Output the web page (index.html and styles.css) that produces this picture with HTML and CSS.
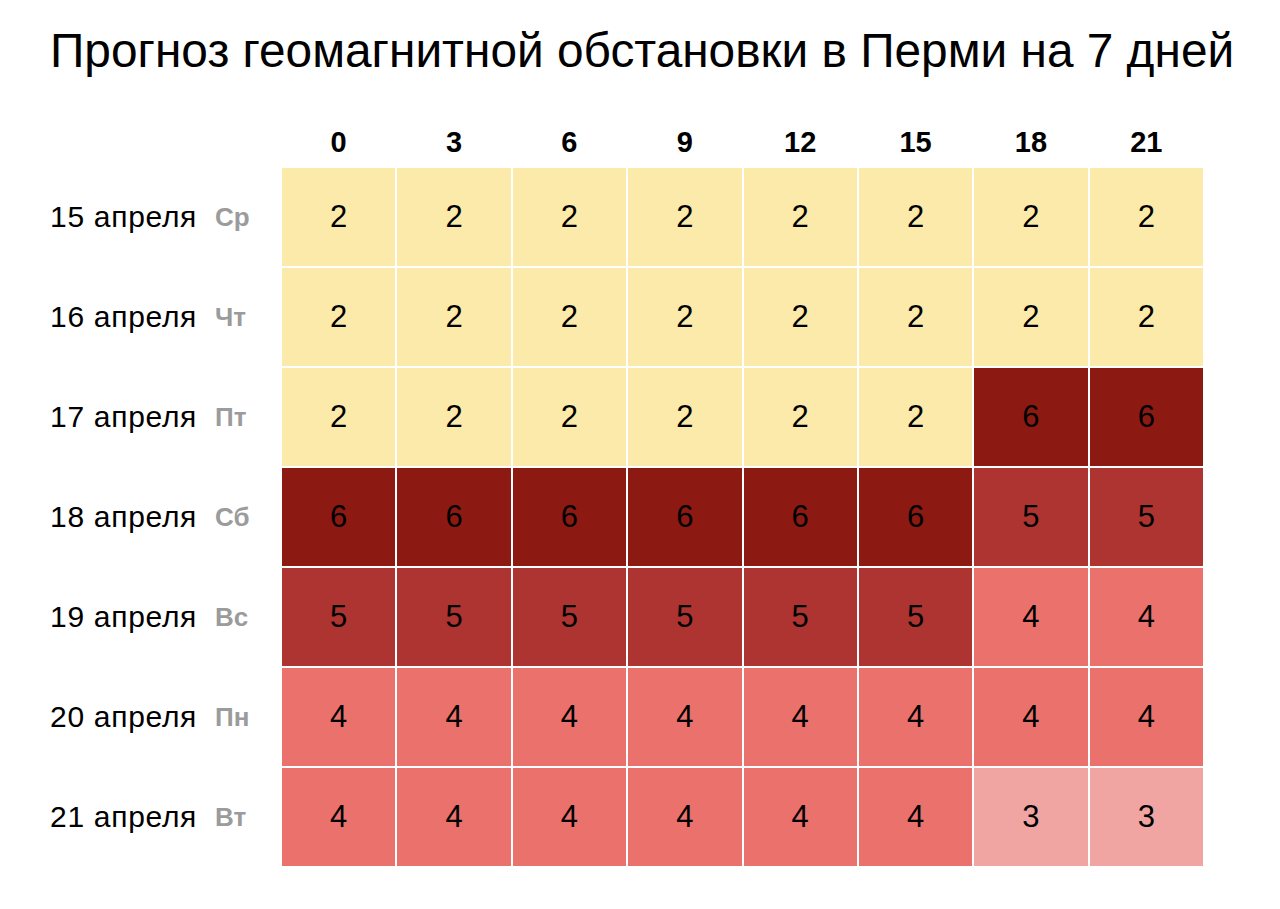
FILE: index.html
```html
<!DOCTYPE html>
<html lang="ru">
<head>
<meta charset="utf-8">
<title>Прогноз геомагнитной обстановки в Перми на 7 дней</title>
<link rel="stylesheet" href="styles.css">
</head>
<body>
<h1 class="title">Прогноз геомагнитной обстановки в Перми на 7 дней</h1>
<div class="grid">
  <div class="corner"></div>
  <div class="hour">0</div><div class="hour">3</div><div class="hour">6</div><div class="hour">9</div>
  <div class="hour">12</div><div class="hour">15</div><div class="hour">18</div><div class="hour">21</div>

  <div class="label"><span class="date">15 апреля</span><span class="dow">Ср</span></div>
  <div class="cell k2">2</div><div class="cell k2">2</div><div class="cell k2">2</div><div class="cell k2">2</div>
  <div class="cell k2">2</div><div class="cell k2">2</div><div class="cell k2">2</div><div class="cell k2">2</div>

  <div class="label"><span class="date">16 апреля</span><span class="dow">Чт</span></div>
  <div class="cell k2">2</div><div class="cell k2">2</div><div class="cell k2">2</div><div class="cell k2">2</div>
  <div class="cell k2">2</div><div class="cell k2">2</div><div class="cell k2">2</div><div class="cell k2">2</div>

  <div class="label"><span class="date">17 апреля</span><span class="dow">Пт</span></div>
  <div class="cell k2">2</div><div class="cell k2">2</div><div class="cell k2">2</div><div class="cell k2">2</div>
  <div class="cell k2">2</div><div class="cell k2">2</div><div class="cell k6">6</div><div class="cell k6">6</div>

  <div class="label"><span class="date">18 апреля</span><span class="dow">Сб</span></div>
  <div class="cell k6">6</div><div class="cell k6">6</div><div class="cell k6">6</div><div class="cell k6">6</div>
  <div class="cell k6">6</div><div class="cell k6">6</div><div class="cell k5">5</div><div class="cell k5">5</div>

  <div class="label"><span class="date">19 апреля</span><span class="dow">Вс</span></div>
  <div class="cell k5">5</div><div class="cell k5">5</div><div class="cell k5">5</div><div class="cell k5">5</div>
  <div class="cell k5">5</div><div class="cell k5">5</div><div class="cell k4">4</div><div class="cell k4">4</div>

  <div class="label"><span class="date">20 апреля</span><span class="dow">Пн</span></div>
  <div class="cell k4">4</div><div class="cell k4">4</div><div class="cell k4">4</div><div class="cell k4">4</div>
  <div class="cell k4">4</div><div class="cell k4">4</div><div class="cell k4">4</div><div class="cell k4">4</div>

  <div class="label"><span class="date">21 апреля</span><span class="dow">Вт</span></div>
  <div class="cell k4">4</div><div class="cell k4">4</div><div class="cell k4">4</div><div class="cell k4">4</div>
  <div class="cell k4">4</div><div class="cell k4">4</div><div class="cell k3">3</div><div class="cell k3">3</div>
</div>
</body>
</html>
```
FILE: styles.css
```css
html, body {
  margin: 0;
  padding: 0;
  background: #fff;
}
body {
  font-family: "Liberation Sans", Arial, sans-serif;
  color: #000;
  width: 1280px;
}
.title {
  margin: 0;
  padding: 23px 0 0 50px;
  font-size: 47.8px;
  font-weight: normal;
  line-height: 55px;
  white-space: nowrap;
}
.grid {
  margin: 40px 0 0 50px;
  width: 1153px;
  display: grid;
  grid-template-columns: 230px repeat(8, 1fr);
  grid-template-rows: 48px repeat(7, 98px);
  column-gap: 2px;
  row-gap: 2px;
}
.hour {
  display: flex;
  align-items: center;
  justify-content: center;
  font-weight: bold;
  font-size: 29px;
}
.label {
  display: flex;
  align-items: center;
  gap: 18px;
}
.date {
  font-size: 30px;
  letter-spacing: 0.7px;
}
.dow {
  font-size: 26px;
  font-weight: bold;
  color: #9b9b9b;
}
.cell {
  display: flex;
  align-items: center;
  justify-content: center;
  font-size: 31px;
  color: #000;
}
.k2 { background: #fbeaa9; }
.k3 { background: #f0a5a2; }
.k4 { background: #eb716c; }
.k5 { background: #ad3430; }
.k6 { background: #8c1a12; }
```
